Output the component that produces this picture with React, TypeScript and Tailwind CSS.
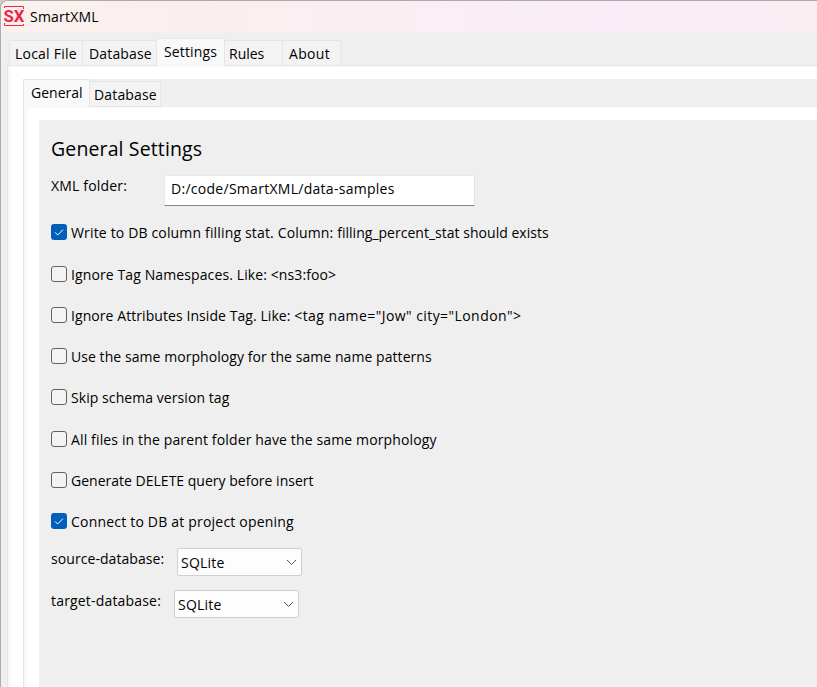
import React from "react";

type TabProps = { label: string; active?: boolean; className: string };

function Tab({ label, active, className }: TabProps) {
  return (
    <div
      className={`box-border whitespace-nowrap border-t border-r border-[#e5e5e5] ${
        active ? "self-stretch border-l bg-[#f9f9f9]" : "h-[26px] border-b bg-[#f3f3f3]"
      } ${className}`}
    >
      {label}
    </div>
  );
}

function CheckRow({ label, checked, className }: { label: React.ReactNode; checked?: boolean; className: string }) {
  return (
    <label className="flex h-4 items-center gap-1">
      {checked ? (
        <span className="flex size-4 shrink-0 items-center justify-center rounded-[3px] bg-[#005fb8]">
          <svg width="16" height="16" viewBox="0 0 16 16" fill="none" stroke="white" strokeWidth="1">
            <path d="M4 8.3L6.7 11L12 5.6" />
          </svg>
        </span>
      ) : (
        <span className="size-4 shrink-0 rounded-[3px] border border-[#626262] bg-[#f3f3f3]" />
      )}
      <span className={`whitespace-nowrap pt-[2px] leading-4 ${className}`}>{label}</span>
    </label>
  );
}

function Combo({ value }: { value: string }) {
  return (
    <div className="flex h-7 w-[125px] items-center justify-between rounded-[2px] border border-[#d0d0d0] bg-[#fdfdfd] pl-[3px] pr-[4px]">
      <span className="pt-px tracking-[0.2px]">{value}</span>
      <svg className="mt-px" width="11" height="7" viewBox="0 0 11 7" fill="none" stroke="#555" strokeWidth="1">
        <path d="M1 1L5.5 5.5L10 1" />
      </svg>
    </div>
  );
}

export default function App() {
  return (
    <div className="h-[687px] w-[817px] overflow-hidden bg-[#d3cfcc] font-['Open_Sans','Noto_Sans',sans-serif] text-[14px] text-black">
      <div className="flex h-full flex-col overflow-hidden rounded-tl-[8px] border-l border-t border-[#ababab] bg-[#efefef]">
        <header className="flex h-[31px] shrink-0 items-start bg-linear-to-r from-[#faf0ec] via-[#f9eef7] via-75% to-[#faeef3] pl-[3px] pt-[5px]">
          <svg width="20" height="20" viewBox="0 0 20 20" fill="none" stroke="#ee2448">
            <path d="M0.5 2V0.5H19.5V3M0.5 17V19.5H19.5V18" strokeWidth="1" />
            <text
              x="-0.5"
              y="16"
              fill="#ee2448"
              stroke="none"
              fontFamily="Roboto, sans-serif"
              fontWeight="700"
              fontSize="17"
              textLength="21"
              lengthAdjust="spacingAndGlyphs"
            >
              SX
            </text>
          </svg>
          <span className="pl-[6px] leading-[22px] tracking-[0.2px]">SmartXML</span>
        </header>
        <nav className="z-10 -mb-px flex h-[34px] shrink-0 items-end pl-2 pt-[6px] leading-[25px]">
          <Tab label="Local File" className="w-[74px] border-l pl-[5px] tracking-[0.22px]" />
          <Tab label="Database" className="w-[73px] border-r-0 pl-[6px] tracking-[0.15px]" />
          <Tab label="Settings" active className="w-[69px] pl-[7px] tracking-[0.15px]" />
          <Tab label="Rules" className="w-[58px] pl-[4px]" />
          <Tab label="About" className="w-[58px] pl-[6px] tracking-[0.3px]" />
        </nav>
        <main className="ml-[6px] flex min-h-0 flex-1 flex-col border-l border-t border-[#e5e5e5] bg-white">
          <div className="flex min-h-0 flex-1 flex-col border-l-[3px] border-t border-[#f9f9f9] pl-3 pt-3">
            <nav className="z-10 -mb-px flex h-[28px] shrink-0 items-end bg-[#efefef] leading-[25px]">
              <Tab label="General" active className="w-[67px] pl-[7px]" />
              <Tab label="Database" className="w-[71px] pl-[4px] tracking-[0.15px]" />
            </nav>
            <section className="flex min-h-0 flex-1 flex-col border-l border-t border-[#e5e5e5]">
              <div className="flex min-h-0 flex-1 flex-col border-l-[3px] border-t border-[#f9f9f9] pl-3 pt-3">
                <div className="flex-1 bg-[#efefef] pl-3 pt-4">
                  <h1 className="text-[19.5px] leading-[26px] tracking-[0.13px]">General Settings</h1>
                  <div className="flex h-[49px] items-start pt-[13px]">
                    <span className="w-[113px] leading-[22px] tracking-[0.18px]">XML folder:</span>
                    <div className="h-[31px] w-[311px] border border-b-[#868686] border-l-[#e8e8e8] border-r-[#e3e3e3] border-t-[#e8e8e8] bg-white pl-[6px] leading-[26px] tracking-[0.28px]">
                      D:/code/SmartXML/data-samples
                    </div>
                  </div>
                  <div className="mt-[13.4px] flex flex-col gap-[25.25px]">
                    <CheckRow
                      checked
                      className="tracking-[0.16px]"
                      label={
                        <>
                          Write to DB column filling stat. Column:{" "}
                          <span className="tracking-[0.02px]">filling_percent_stat should exists</span>
                        </>
                      }
                    />
                    <CheckRow className="tracking-[0.11px]" label="Ignore Tag Namespaces. Like: <ns3:foo>" />
                    <CheckRow
                      className="tracking-[0.07px]"
                      label={
                        <>
                          Ignore Attributes Inside Tag. Like:{" "}
                          <span className="tracking-[0.43px]">{'<tag name="Jow" city="London">'}</span>
                        </>
                      }
                    />
                    <CheckRow className="tracking-[0.06px]" label="Use the same morphology for the same name patterns" />
                    <CheckRow className="tracking-[0.07px]" label="Skip schema version tag" />
                    <CheckRow className="tracking-[0.14px]" label="All files in the parent folder have the same morphology" />
                    <CheckRow className="tracking-[0.01px]" label="Generate DELETE query before insert" />
                    <CheckRow checked className="tracking-[0.2px]" label="Connect to DB at project opening" />
                  </div>
                  <div className="mt-[18.85px] flex h-7">
                    <span className="w-[126px] leading-[22px] tracking-[0.07px]">source-database:</span>
                    <Combo value="SQLite" />
                  </div>
                  <div className="mt-[14px] flex h-7">
                    <span className="w-[123px] leading-[22px] tracking-[0.18px]">target-database:</span>
                    <Combo value="SQLite" />
                  </div>
                </div>
              </div>
            </section>
          </div>
        </main>
      </div>
    </div>
  );
}
